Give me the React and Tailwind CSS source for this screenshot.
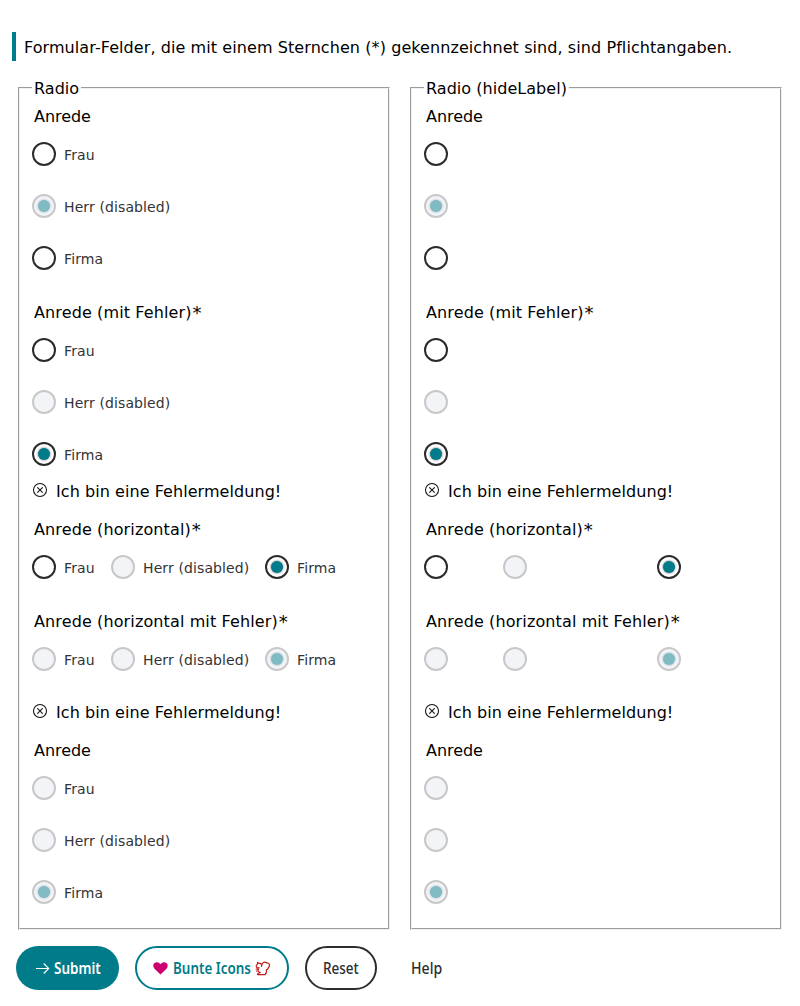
import React from "react";

function Radio({ label, checked, disabled, hideLabel, width = "" }) {
  const ring = disabled ? "border-[#c8c8c8] bg-[#f2f4f8]" : "border-[#2b2b2d] bg-white";
  const dot = disabled ? "bg-[#80bbc3]" : "bg-[#007b89]";
  const halo = disabled ? "shadow-[0_0_2px_0.5px_#b8c5cc]" : "shadow-[0_0_2px_0.5px_#9a9a9a]";
  return (
    <label className={`flex h-10 shrink-0 items-center ${width}`}>
      <span className={`flex size-6 shrink-0 items-center justify-center rounded-full border-2 ${ring}`}>
        {checked && <span className={`size-3 rounded-full ${dot} ${halo}`} />}
      </span>
      {!hideLabel && (
        <span className="ml-2 pt-[2px] text-[14px] leading-5 tracking-[0.11px] whitespace-nowrap text-[#333335]">{label}</span>
      )}
    </label>
  );
}

function ErrorMessage() {
  return (
    <div className="flex h-[34px] items-center">
      <svg className="mb-[2px] size-4 shrink-0" viewBox="0 0 16 16" fill="none" stroke="#111" strokeWidth="1.05">
        <circle cx="8" cy="8" r="6.5" />
        <path d="M5.3 5.3l5.4 5.4M10.7 5.3l-5.4 5.4" />
      </svg>
      <span className="ml-2 pt-[2px] leading-5 whitespace-nowrap tracking-[0.06px]">Ich bin eine Fehlermeldung!</span>
    </div>
  );
}

function Group({ label, required, checked, disabled = [], horizontal, hideLabel, error, className = "" }) {
  const options = ["Frau", "Herr (disabled)", "Firma"];
  const widths = horizontal ? ["w-[79px]", "w-[154px]", ""] : ["", "", ""];
  return (
    <div className={className}>
      <div className={`flex h-9 items-center pt-[2px] pl-[2px] whitespace-nowrap ${required ? "tracking-[0.12px]" : "tracking-[-0.05px]"}`}>
        {label}
        {required && <span className="ml-px text-[18px] leading-5">*</span>}
      </div>
      <div className={horizontal ? "flex" : "flex flex-col gap-3"}>
        {options.map((o, i) => (
          <Radio key={o} label={o} width={widths[i]} checked={checked === i} disabled={disabled.includes(i)} hideLabel={hideLabel} />
        ))}
      </div>
      {error && <div className={horizontal ? "pt-4" : ""}><ErrorMessage /></div>}
    </div>
  );
}

function Panel({ title, hideLabel }) {
  return (
    <fieldset className="h-[852px] w-[372px] border-2 border-[#f0f0f0] px-3 [border-style:groove]">
      <legend className="h-5 px-[2px] pt-px leading-5 whitespace-nowrap tracking-[0.04px]">{title}</legend>
      <Group label="Anrede" checked={1} disabled={[1]} hideLabel={hideLabel} className="mb-4" />
      <Group label="Anrede (mit Fehler)" required checked={2} disabled={[1]} hideLabel={hideLabel} error className="mb-[3px]" />
      <Group label="Anrede (horizontal)" required checked={2} disabled={[1]} hideLabel={hideLabel} horizontal className="mb-4" />
      <Group label="Anrede (horizontal mit Fehler)" required checked={2} disabled={[0, 1, 2]} hideLabel={hideLabel} horizontal error className="mb-[3px]" />
      <Group label="Anrede" checked={2} disabled={[0, 1, 2]} hideLabel={hideLabel} />
    </fieldset>
  );
}

function ButtonText({ children, width, scale }) {
  return (
    <span className={`inline-block ${width} pb-px whitespace-nowrap`}>
      <span className={`inline-block origin-left ${scale}`}>{children}</span>
    </span>
  );
}

export default function App() {
  return (
    <main className="h-[1006px] w-[800px] overflow-hidden bg-white pt-8 font-['DejaVu_Sans',sans-serif] text-[16px] text-black">
      <p className="ml-3 flex h-[29px] items-center border-l-4 border-[#007b89] pt-[2px] pl-2 whitespace-nowrap tracking-[0.08px]">
        Formular-Felder, die mit einem Sternchen (*) gekennzeichnet sind, sind Pflichtangaben.
      </p>
      <div className="mt-[17px] ml-[18px] flex gap-5">
        <Panel title="Radio" />
        <Panel title="Radio (hideLabel)" hideLabel />
      </div>
      <div className="mt-4 ml-4 flex gap-4 font-['Noto_Sans',sans-serif] text-[15.5px] leading-5">
        <button className="flex h-11 w-[103px] items-center rounded-full bg-[#007b89] pl-[19px] font-semibold text-white">
          <svg className="mr-[4px] h-4 w-[15px] shrink-0" viewBox="0 0 15 16" fill="none" stroke="currentColor" strokeWidth="1.1">
            <path d="M1 8.5h12.4M8.7 3.5l5 5-5 5" />
          </svg>
          <ButtonText width="w-[47px]" scale="scale-x-[0.87]">Submit</ButtonText>
        </button>
        <button className="flex h-11 w-[154px] items-center rounded-full border-2 border-[#007b89] pl-4 font-semibold text-[#007b89]">
          <svg className="mr-[5px] h-[13px] w-[15px] shrink-0" viewBox="0 0 15 13" fill="#cc0070">
            <path d="M7.5 12.5 1.5 6.7C-.2 5-.1 2.1 1.6.9 3.5-.4 6.2.1 7.5 2.2 8.8.1 11.5-.4 13.4.9c1.7 1.2 1.8 4.1.1 5.8z" />
          </svg>
          <ButtonText width="w-[78px]" scale="scale-x-[0.865]">Bunte Icons</ButtonText>
          <svg className="ml-1 h-[15px] w-4 shrink-0" viewBox="0 0 16 15" fill="none" stroke="#c41a1a" strokeWidth="1.2" strokeLinejoin="round" strokeLinecap="round">
            <path d="M6.6 5.4C6.5 3.2 7.9 1.2 9.8 1.2c1.2 0 1.6.7 2.6.8 1.4.2 2.2 1.2 2.1 2.6-.1 1.3-1 1.6-1.2 2.4-.3 1.1-.9 1.7-1.9 1.8.4 1.7 0 3.5-1.3 4.8H2.5c0-1 .7-1.6 2-1.7l.7-.3C3.9 11.400 3.300 10.700 3.300 9.800L1.500 10M3.500 8.300 1.200 8M4.200 6.900C2.500 7.100 1.200 6.500 1.200 5.300 1.200 4.300 2.300 3.700 2.500 2.600V1.300L3.800 2.400C5.100 2 6.200 2.700 6.300 3.800" />
          </svg>
        </button>
        <button className="flex h-11 w-[72px] items-center rounded-full border-2 border-[#2d2d30] pl-4 font-medium text-[#2d2d30]">
          <ButtonText width="w-[36px]" scale="scale-x-[0.87]">Reset</ButtonText>
        </button>
        <button className="flex h-11 w-[68px] items-center pl-[18px] font-medium text-[#2d2d30]">
          <ButtonText width="w-[32px]" scale="scale-x-[0.91]">Help</ButtonText>
        </button>
      </div>
    </main>
  );
}
